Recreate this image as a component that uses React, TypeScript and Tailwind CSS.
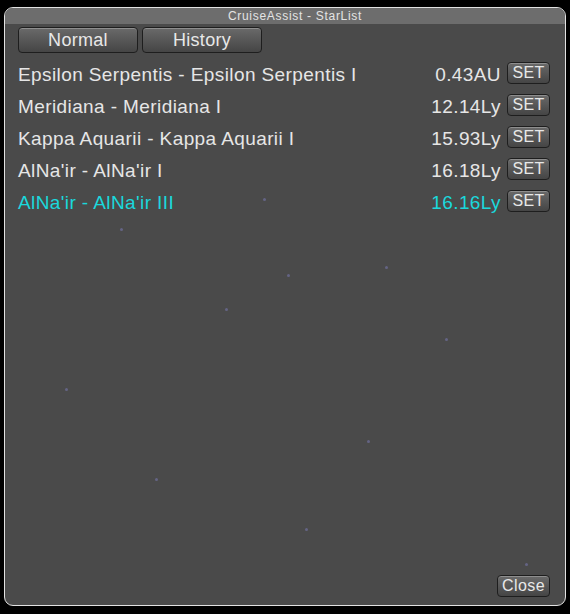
import React from 'react';

interface StarItem {
  name: string;
  distance: string;
  active?: boolean;
}

const stars: StarItem[] = [
  { name: 'Epsilon Serpentis - Epsilon Serpentis I', distance: '0.43AU' },
  { name: 'Meridiana - Meridiana I', distance: '12.14Ly' },
  { name: 'Kappa Aquarii - Kappa Aquarii I', distance: '15.93Ly' },
  { name: "AlNa'ir - AlNa'ir I", distance: '16.18Ly' },
  { name: "AlNa'ir - AlNa'ir III", distance: '16.16Ly', active: true },
];

// faint speckles in the window background
const specks = [
  { x: 258, y: 190 },
  { x: 115, y: 220 },
  { x: 282, y: 266 },
  { x: 380, y: 258 },
  { x: 220, y: 300 },
  { x: 440, y: 330 },
  { x: 362, y: 432 },
  { x: 150, y: 470 },
  { x: 520, y: 555 },
  { x: 60, y: 380 },
  { x: 300, y: 520 },
];

const btn =
  'rounded-[4px] border border-[#1e1e1e] bg-gradient-to-b from-[#6a6a6a] to-[#454545] shadow-[inset_0_1px_0_rgba(255,255,255,0.25)] text-[#e8e8e8] flex items-center justify-center';

const App: React.FC = () => {
  return (
    <div
      className="w-[570px] h-[614px] bg-black pt-[7px] pl-[4px]"
      style={{ fontFamily: '"Liberation Sans", Arial, sans-serif' }}
    >
      <div className="relative w-[562px] h-[599px] rounded-[9px] border-[1.5px] border-[#e2e2e2] overflow-hidden flex flex-col bg-[#4a4a4a]">
        {/* Title */}
        <div className="h-[16px] bg-[#6d6d6d] pl-[20px] text-[12px] tracking-[0.7px] leading-[16px] text-[#e4e4e4] text-center shrink-0">
          CruiseAssist - StarList
        </div>

        {specks.map((s, i) => (
          <div
            key={i}
            className="absolute w-[3px] h-[3px] rounded-full bg-[#6a6a92] opacity-80"
            style={{ left: s.x, top: s.y }}
          />
        ))}

        <div className="relative flex-1 flex flex-col pl-[13px] pr-[15px] pb-[8px]">
          {/* Tabs */}
          <div className="flex gap-[4px] mt-[3px]">
            <button className={`${btn} w-[120px] h-[26px] text-[18px] tracking-[0.3px] from-[#5a5a5a] to-[#3e3e3e]`}>Normal</button>
            <button className={`${btn} w-[120px] h-[26px] text-[18px] tracking-[0.3px]`}>History</button>
          </div>

          {/* List */}
          <div className="flex flex-col mt-[5px]">
            {stars.map((s, i) => (
              <div key={i} className="h-[32px] flex items-center">
                <span
                  className={`flex-1 text-[19px] tracking-[0.4px] pt-[2px] ${s.active ? 'text-[#1ad8dc]' : 'text-[#e6e6e6]'}`}
                >
                  {s.name}
                </span>
                <span
                  className={`text-[19px] tracking-[0.4px] pt-[2px] mr-[6px] ${s.active ? 'text-[#1ad8dc]' : 'text-[#e6e6e6]'}`}
                >
                  {s.distance}
                </span>
                <button className={`${btn} w-[43px] h-[22px] text-[16px] tracking-[0.3px] mb-[3px]`}>SET</button>
              </div>
            ))}
          </div>

          <div className="flex-1" />
          <div className="flex justify-end">
            <button className={`${btn} w-[53px] h-[22px] text-[16px] tracking-[0.4px]`}>Close</button>
          </div>
        </div>
      </div>
    </div>
  );
};

export default App;
